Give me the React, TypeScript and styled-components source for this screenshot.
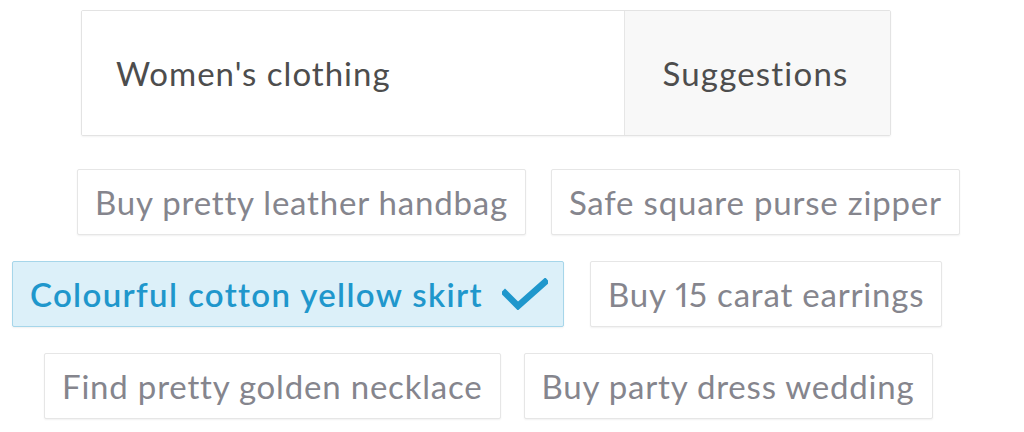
import * as React from 'react';
import styled, { createGlobalStyle } from 'styled-components';

const GlobalStyle = createGlobalStyle`
  html, body {
    margin: 0;
    padding: 0;
    background: #ffffff;
  }
  body {
    font-family: 'Lato', 'Liberation Sans', sans-serif;
    -webkit-font-smoothing: antialiased;
  }
`;

const Page = styled.div`
  width: 1024px;
  height: 432px;
  padding-top: 10px;
  box-sizing: border-box;
  overflow: hidden;
`;

const Header = styled.div`
  display: flex;
  width: 810px;
  height: 126px;
  margin-left: 81px;
  border: 1px solid #e3e3e3;
  border-radius: 2px;
  box-sizing: border-box;
  box-shadow: 0 1px 2px rgba(0, 0, 0, 0.05);
  overflow: hidden;
`;

const Category = styled.div`
  flex: 1;
  display: flex;
  align-items: center;
  padding-left: 34px;
  font-size: 33px;
  letter-spacing: 1px;
  color: #4d4d4d;
  background: #ffffff;
`;

const Tab = styled.div`
  width: 266px;
  display: flex;
  align-items: center;
  justify-content: center;
  padding-right: 4px;
  box-sizing: border-box;
  border-left: 1px solid #e6e6e6;
  background: #f8f8f8;
  font-size: 33px;
  letter-spacing: 1.2px;
  color: #4d4d4d;
`;

const Suggestions = styled.div`
  display: flex;
  flex-direction: column;
  gap: 26px;
  margin-top: 33px;
`;

const Row = styled.div<{ offset: number; spacing: number }>`
  display: flex;
  gap: ${({ spacing }) => spacing}px;
  padding-left: ${({ offset }) => offset}px;
`;

const Chip = styled.div<{ selected?: boolean }>`
  display: flex;
  align-items: center;
  gap: 19px;
  height: 66px;
  padding: ${({ selected }) => (selected ? '0 15px 0 17px' : '0 17px')};
  box-sizing: border-box;
  border: 1px solid ${({ selected }) => (selected ? '#a6d6ea' : '#e6e6e6')};
  border-radius: 2px;
  background: ${({ selected }) => (selected ? '#dcf0f9' : '#ffffff')};
  color: ${({ selected }) => (selected ? '#1f97cc' : '#85858d')};
  font-size: 33px;
  font-weight: ${({ selected }) => (selected ? 600 : 400)};
  font-variant-numeric: proportional-nums;
  letter-spacing: ${({ selected }) => (selected ? '1.35px' : '0.8px')};
  white-space: nowrap;
  box-shadow: 0 1px 2px rgba(0, 0, 0, 0.06);
`;

const Check = () => (
  <svg width="46" height="32" viewBox="0 0 46 32" fill="none">
    <path d="M3 15 L16 28 L43 4" stroke="#1f97cc" strokeWidth="6.5" strokeLinecap="square" strokeLinejoin="miter" />
  </svg>
);

const rows = [
  { offset: 77, spacing: 25, items: ['Buy pretty leather handbag', 'Safe square purse zipper'] },
  { offset: 12, spacing: 26, items: ['Colourful cotton yellow skirt', 'Buy 15 carat earrings'] },
  { offset: 44, spacing: 23, items: ['Find pretty golden necklace', 'Buy party dress wedding'] },
];

const selectedItem = 'Colourful cotton yellow skirt';

const App = () => {
  return (
    <Page>
      <GlobalStyle />
      <Header>
        <Category>Women's clothing</Category>
        <Tab>Suggestions</Tab>
      </Header>
      <Suggestions>
        {rows.map((row, i) => (
          <Row key={i} offset={row.offset} spacing={row.spacing}>
            {row.items.map((item) => (
              <Chip key={item} selected={item === selectedItem}>
                {item}
                {item === selectedItem && <Check />}
              </Chip>
            ))}
          </Row>
        ))}
      </Suggestions>
    </Page>
  );
};

export default App;
